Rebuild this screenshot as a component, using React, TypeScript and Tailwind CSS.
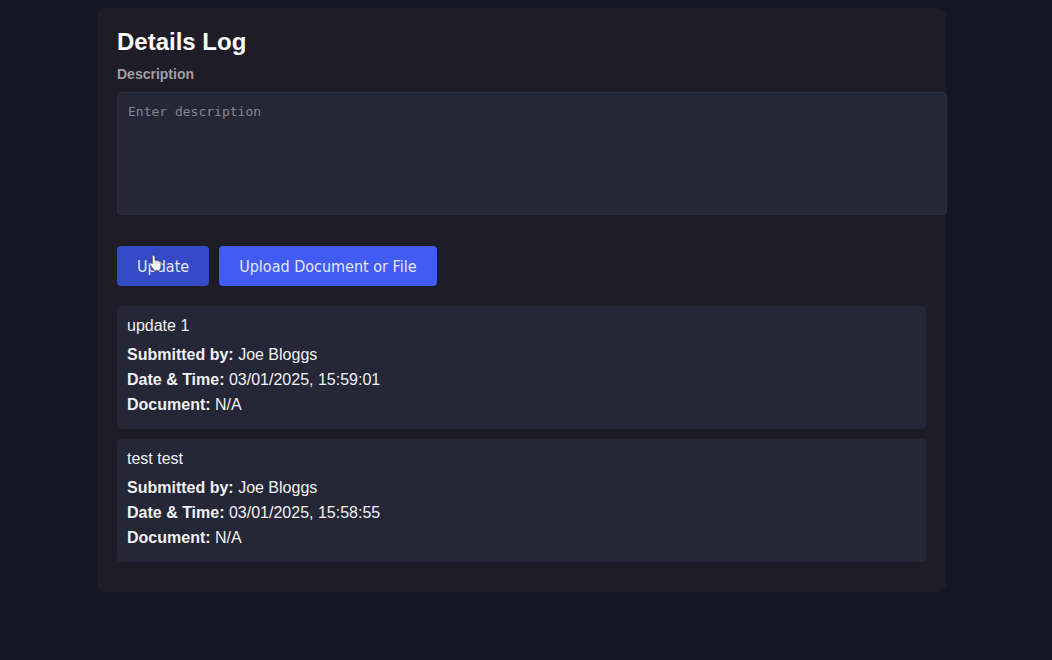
type LogEntry = {
  text: string;
  author: string;
  time: string;
  document: string;
};

const entries: LogEntry[] = [
  { text: "update 1", author: "Joe Bloggs", time: "03/01/2025, 15:59:01", document: "N/A" },
  { text: "test test", author: "Joe Bloggs", time: "03/01/2025, 15:58:55", document: "N/A" },
];

function HandCursor() {
  return (
    <svg
      aria-hidden="true"
      viewBox="0 0 14 19"
      className="pointer-events-none absolute left-8 top-2 h-[19px] w-[14px]"
    >
      <path
        d="M3.600 1.600c.9-.8 2.400-.1 2.400 1.200V6.300c.6-.4 1.600-.2 1.900.4.600-.4 1.600-.1 1.900.6.800-.3 2.200.1 2.200 1.400v4.300c0 1.500-1.300 2.300-1.300 3.800H5c0-1.300-1.300-2.300-2.200-3.600L.900 10.400c-.6-1.200.8-2 1.700-1.200l.7.700V2.600c0-.4.100-.7.300-1z"
        fill="#f4f4f6"
        stroke="#34384f"
        strokeWidth="0.7"
        strokeLinejoin="round"
      />
      <path d="M6.200 6.500v3M8.100 7v2.700M10 7.600v2.300" stroke="#8b8fa5" strokeWidth="0.4" fill="none" />
    </svg>
  );
}

function Entry({ entry }: { entry: LogEntry }) {
  return (
    <li className="rounded-sm bg-[#252736] px-2.5 pt-2 pb-3">
      <p className="mb-1 leading-6">{entry.text}</p>
      <dl className="leading-[25px]">
        <div>
          <dt className="inline font-bold">Submitted by:</dt> <dd className="inline">{entry.author}</dd>
        </div>
        <div>
          <dt className="inline font-bold">Date &amp; Time:</dt> <dd className="inline">{entry.time}</dd>
        </div>
        <div>
          <dt className="inline font-bold">Document:</dt> <dd className="inline">{entry.document}</dd>
        </div>
      </dl>
    </li>
  );
}

export default function App() {
  return (
    <div className="min-h-screen bg-[#111822] py-2 pr-[9px] font-['Liberation_Sans',Arial,sans-serif] text-base text-[#f1f1f4]">
      <main className="mx-auto max-w-[849px] rounded-lg bg-[#1d1c27] px-5 pt-4 pb-[30px]">
        <h1 className="text-2xl leading-9 font-bold text-white">Details Log</h1>
        <label htmlFor="description" className="mt-1 block text-sm leading-5 font-bold text-[#a09fa3]">
          Description
        </label>
        <textarea
          id="description"
          placeholder="Enter description"
          className="-mr-5 mt-2 block h-[123px] w-[calc(100%+21px)] resize-none rounded-sm border border-[#2d2f3d] bg-[#252736] px-2.5 py-[9px] font-['DejaVu_Sans_Mono',monospace] text-[13px] leading-5 text-white outline-none placeholder:text-[#85868f]"
        />
        <div className="mt-[31px] flex gap-2.5 font-['DejaVu_Sans_Condensed','Noto_Sans',sans-serif] text-base text-[#e4e8ff]">
          <button type="button" className="relative h-10 rounded-sm bg-[#3449c5] px-5 pt-0.5">
            Update
            <HandCursor />
          </button>
          <button type="button" className="h-10 rounded-sm bg-[#425bf5] px-5 pt-0.5">
            Upload Document or File
          </button>
        </div>
        <ul className="mt-5 flex flex-col gap-2.5">
          {entries.map((entry) => (
            <Entry key={entry.time} entry={entry} />
          ))}
        </ul>
      </main>
    </div>
  );
}
